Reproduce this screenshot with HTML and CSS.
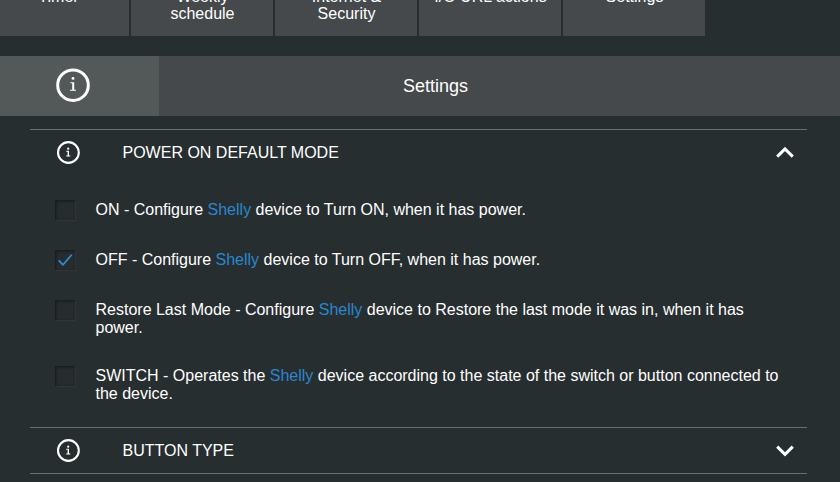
FILE: index.html
```html
<!DOCTYPE html>
<html lang="en">
<head>
<meta charset="utf-8">
<title>Settings</title>
<link rel="stylesheet" href="styles.css">
</head>
<body>
<svg class="defs" width="0" height="0">
  <symbol id="info" viewBox="0 0 34 34">
    <circle cx="17" cy="17.2" r="15.3" fill="none" stroke="#fff" stroke-width="3"/>
    <circle cx="17" cy="10.4" r="1.4" fill="#fff"/>
    <path d="M14.3 14.2H18.2V21.8H20V22.8H14V21.8H16.2V15.2H14.3Z" fill="#fff"/>
  </symbol>
  <symbol id="info-small" viewBox="0 0 24 24">
    <circle cx="12.4" cy="11.5" r="10.4" fill="none" stroke="#fff" stroke-width="2.1"/>
    <circle cx="12.2" cy="7.7" r="1.1" fill="#fff"/>
    <path d="M10.3 9.8H13V14.6H14.3V15.5H10.2V14.6H11.6V10.7H10.3Z" fill="#fff"/>
  </symbol>
</svg>
<nav class="tabs">
  <div class="tab">Timer</div>
  <div class="tab">Weekly<br>schedule</div>
  <div class="tab">Internet &amp;<br>Security</div>
  <div class="tab">I/O URL actions</div>
  <div class="tab">Settings</div>
</nav>
<header class="bar">
  <div class="bar-info"><svg width="34" height="34"><use href="#info"/></svg></div>
  <h1>Settings</h1>
</header>
<main>
  <section class="row">
    <svg class="info" width="24" height="24"><use href="#info-small"/></svg>
    <h2>POWER ON DEFAULT MODE</h2>
    <svg class="chevron" width="20" height="12" viewBox="0 0 20 12"><path d="M2.2 9.6L10 1.9L17.8 9.6"/></svg>
  </section>
  <div class="options">
    <div class="option"><span class="box"></span><p>ON - Configure <b>Shelly</b> device to Turn ON, when it has power.</p></div>
    <div class="option"><span class="box"><svg width="20" height="20"><path d="M3.7 10.3L8 14.8L16.7 4.8"/></svg></span><p>OFF - Configure <b>Shelly</b> device to Turn OFF, when it has power.</p></div>
    <div class="option"><span class="box"></span><p>Restore Last Mode - Configure <b>Shelly</b> device to Restore the last mode it was in, when it has power.</p></div>
    <div class="option"><span class="box"></span><p>SWITCH - Operates the <b>Shelly</b> device according to the state of the switch or button connected to the device.</p></div>
  </div>
  <section class="row last">
    <svg class="info" width="24" height="24"><use href="#info-small"/></svg>
    <h2>BUTTON TYPE</h2>
    <svg class="chevron" width="20" height="12" viewBox="0 0 20 12"><path d="M2.2 1.6L10 9.3L17.8 1.6"/></svg>
  </section>
</main>
</body>
</html>
```
FILE: styles.css
```css
* { box-sizing: border-box; margin: 0; padding: 0; }
html, body { height: 482px; overflow: hidden; }
body {
  background: #272e30;
  color: #fff;
  font: 16px/18px "Liberation Sans", Arial, sans-serif;
}
svg { display: block; }
.defs { height: 0; }
.tabs {
  display: flex;
  gap: 2px;
  height: 50px;
  margin: -14px 0 20px -13px;
}
.tab {
  width: 142px;
  padding: 2px 0 0 1px;
  background: #45494b;
  line-height: 17px;
  text-align: center;
}
.bar {
  display: flex;
  height: 60px;
  margin-bottom: 13px;
  background: #45494b;
}
.bar-info {
  width: 159px;
  padding: 12px 0 0 56px;
  background: #535859;
}
h1 {
  padding-left: 244px;
  font-size: 18px;
  font-weight: normal;
  line-height: 60px;
}
main { width: 777px; margin-left: 30px; }
.row {
  display: flex;
  align-items: center;
  height: 47px;
  border-top: 1px solid #696e6f;
}
.row.last { border-bottom: 1px solid #696e6f; }
.info { margin-left: 26px; }
h2 {
  flex: 1;
  padding-left: 42.5px;
  font-size: 16px;
  font-weight: normal;
}
.chevron { margin-right: 12px; }
.chevron path { fill: none; stroke: #fff; stroke-width: 3; }
.options {
  display: flex;
  flex-direction: column;
  gap: 30px;
  height: 251px;
  padding: 24px 0 0 25px;
}
.option { display: flex; gap: 20px; min-height: 20px; height: 20px; }
.option:nth-child(3) { height: 36px; }
.option p { width: 700px; padding: 1px 0 0 0.5px; }
.option b { color: #2a86cf; font-weight: normal; }
.box {
  flex: none;
  width: 20px;
  height: 20px;
  background: #272c2e;
  box-shadow: inset 1px 1px 3px #14191a, 1px 1px 1px #303638;
}
.box path { fill: none; stroke: #2f8fdc; stroke-width: 1.7; }
```
